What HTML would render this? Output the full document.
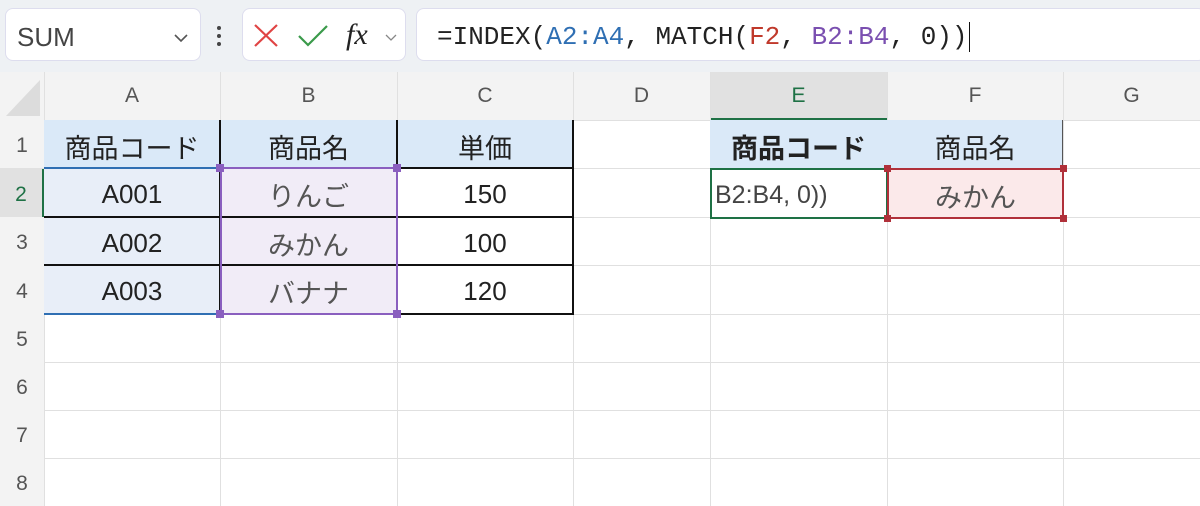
<!DOCTYPE html>
<html><head><meta charset="utf-8"><style>
body{margin:0;width:1200px;height:506px;overflow:hidden;background:#fff;font-family:"Liberation Sans","Noto Sans CJK JP",sans-serif;position:relative}
.a{position:absolute;box-sizing:border-box}
.t{display:flex;align-items:center;justify-content:center}
.hl{position:absolute;height:1px;background:#e0e0e0;left:0;width:1200px}
.vl{position:absolute;width:1px;background:#e0e0e0;top:72px;height:434px}
.ch{position:absolute;top:72px;height:48px;color:#555;font-size:21px;display:flex;align-items:center;justify-content:center}
.rh{position:absolute;left:0;width:44px;color:#555;font-size:21px;display:flex;align-items:center;justify-content:center;background:#f3f3f3;padding-top:4px;box-sizing:border-box}
.c{position:absolute;font-size:26px;color:#222;display:flex;align-items:center;justify-content:center;padding-top:4px;box-sizing:border-box}
.j{font-size:27px}
</style></head><body>
<div class="a" style="left:0;top:0;width:1200px;height:72px;background:#eef1f4"></div>
<div class="a t" style="left:5px;top:8px;width:196px;height:53px;background:#fff;border:1px solid #dde;border-radius:8px;justify-content:flex-start;padding-left:11px;padding-top:6px;font-size:26px;color:#444">SUM</div>
<svg class="a" style="left:173px;top:33px" width="16" height="10"><path d="M2 2L8 8L14 2" stroke="#555" stroke-width="1.6" fill="none"/></svg>
<div class="a" style="left:217px;top:26px;width:4px;height:4px;background:#444;border-radius:2px"></div>
<div class="a" style="left:217px;top:34px;width:4px;height:4px;background:#444;border-radius:2px"></div>
<div class="a" style="left:217px;top:42px;width:4px;height:4px;background:#444;border-radius:2px"></div>
<div class="a" style="left:242px;top:8px;width:164px;height:53px;background:#fff;border:1px solid #dde;border-radius:8px"></div>
<svg class="a" style="left:252px;top:22px" width="28" height="26"><path d="M3 3L25 24M25 3L3 24" stroke="#e04444" stroke-width="2.2"/></svg>
<svg class="a" style="left:297px;top:22px" width="32" height="26"><path d="M2 14L11 23L30 4" stroke="#3a9a4a" stroke-width="2.2" fill="none"/></svg>
<div class="a" style="left:346px;top:18px;font-family:'Liberation Serif',serif;font-style:italic;font-size:30px;color:#222">fx</div>
<svg class="a" style="left:384px;top:33px" width="14" height="9"><path d="M2 2L7 7L12 2" stroke="#888" stroke-width="1.3" fill="none"/></svg>
<div class="a" style="left:416px;top:8px;width:790px;height:53px;background:#fff;border:1px solid #dde;border-radius:8px"></div>
<div class="a" style="left:437px;top:22px;font-family:'Liberation Mono',monospace;font-size:26px;color:#222;white-space:pre">=INDEX(<span style="color:#2f6fb3">A2:A4</span>, MATCH(<span style="color:#c0392b">F2</span>, <span style="color:#7a4fb0">B2:B4</span>, 0))</div>
<div class="a" style="left:969px;top:22px;width:1px;height:30px;background:#111"></div>

<div class="a" style="left:0;top:72px;width:1200px;height:48px;background:#f3f3f3"></div>
<div class="a" style="left:710px;top:72px;width:177px;height:48px;background:#e1e1e1"></div>
<svg class="a" style="left:6px;top:80px" width="34" height="36"><path d="M34 0L34 36L0 36Z" fill="#dcdcdc"/></svg>
<div class="a" style="left:0;top:120px;width:44px;height:386px;background:#f3f3f3"></div>
<div class="a" style="left:0;top:168px;width:44px;height:49px;background:#e1e1e1"></div>
<div class="a" style="left:42px;top:168px;width:2px;height:49px;background:#1e7145"></div>
<div class="a" style="left:710px;top:118px;width:177px;height:2px;background:#1e7145"></div>

<div class="hl" style="top:120px"></div><div class="hl" style="top:168px"></div><div class="hl" style="top:217px"></div><div class="hl" style="top:265px"></div><div class="hl" style="top:314px"></div><div class="hl" style="top:362px"></div><div class="hl" style="top:410px"></div><div class="hl" style="top:458px"></div>
<div class="vl" style="left:44px"></div><div class="vl" style="left:220px"></div><div class="vl" style="left:397px"></div><div class="vl" style="left:573px"></div><div class="vl" style="left:710px"></div><div class="vl" style="left:887px"></div><div class="vl" style="left:1063px"></div>

<div class="ch" style="left:44px;width:176px">A</div><div class="ch" style="left:220px;width:177px">B</div><div class="ch" style="left:397px;width:176px">C</div><div class="ch" style="left:573px;width:137px">D</div><div class="ch" style="left:710px;width:177px;color:#1e7145">E</div><div class="ch" style="left:887px;width:176px">F</div><div class="ch" style="left:1063px;width:137px">G</div>
<div class="rh" style="top:120px;height:48px">1</div><div class="rh" style="top:168px;height:49px;color:#1e7145;background:#e1e1e1;width:42px">2</div><div class="rh" style="top:217px;height:48px">3</div><div class="rh" style="top:265px;height:49px">4</div><div class="rh" style="top:314px;height:48px">5</div><div class="rh" style="top:362px;height:48px">6</div><div class="rh" style="top:410px;height:48px">7</div><div class="rh" style="top:458px;height:48px">8</div>

<div class="a" style="left:44px;top:120px;width:529px;height:48px;background:#dae9f8"></div>
<div class="a" style="left:44px;top:168px;width:176px;height:146px;background:#e8eef8"></div>
<div class="a" style="left:220px;top:168px;width:177px;height:146px;background:#f1ecf7"></div>
<div class="a" style="left:44px;top:120px;width:530px;height:195px;border:2px solid #111;border-top:none;border-left:none"></div>
<div class="a" style="left:219px;top:120px;width:2px;height:195px;background:#111"></div>
<div class="a" style="left:396px;top:120px;width:2px;height:195px;background:#111"></div>
<div class="a" style="left:44px;top:216px;width:530px;height:2px;background:#111"></div>
<div class="a" style="left:44px;top:264px;width:530px;height:2px;background:#111"></div>
<div class="a" style="left:397px;top:167px;width:177px;height:2px;background:#111"></div>
<div class="a" style="left:44px;top:167px;width:176px;height:2px;background:#2f6fb3"></div>
<div class="a" style="left:44px;top:313px;width:176px;height:2px;background:#2f6fb3"></div>
<div class="a" style="left:220px;top:167px;width:178px;height:148px;border:2px solid #8a5fbf"></div>
<div class="a" style="left:216px;top:164px;width:8px;height:8px;background:#8a5fbf"></div><div class="a" style="left:393px;top:164px;width:8px;height:8px;background:#8a5fbf"></div><div class="a" style="left:216px;top:310px;width:8px;height:8px;background:#8a5fbf"></div><div class="a" style="left:393px;top:310px;width:8px;height:8px;background:#8a5fbf"></div>

<div class="c j" style="left:44px;top:120px;width:176px;height:48px">商品コード</div>
<div class="c j" style="left:220px;top:120px;width:177px;height:48px">商品名</div>
<div class="c j" style="left:397px;top:120px;width:176px;height:48px">単価</div>
<div class="c" style="left:44px;top:168px;width:176px;height:49px">A001</div>
<div class="c" style="left:44px;top:217px;width:176px;height:48px">A002</div>
<div class="c" style="left:44px;top:265px;width:176px;height:49px">A003</div>
<div class="c j" style="left:220px;top:168px;width:177px;height:49px;color:#555">りんご</div>
<div class="c j" style="left:220px;top:217px;width:177px;height:48px;color:#555">みかん</div>
<div class="c j" style="left:220px;top:265px;width:177px;height:49px;color:#555">バナナ</div>
<div class="c" style="left:397px;top:168px;width:176px;height:49px">150</div>
<div class="c" style="left:397px;top:217px;width:176px;height:48px">100</div>
<div class="c" style="left:397px;top:265px;width:176px;height:49px">120</div>

<div class="a" style="left:710px;top:120px;width:353px;height:48px;background:#dae9f8;border-right:1px solid #555"></div>
<div class="c j" style="left:710px;top:120px;width:177px;height:48px;font-weight:bold">商品コード</div>
<div class="c j" style="left:887px;top:120px;width:176px;height:48px">商品名</div>
<div class="a" style="left:710px;top:168px;width:178px;height:51px;border:2px solid #1e7145;background:#fff"></div>
<div class="c" style="left:715px;top:168px;height:50px;color:#444;font-size:25px">B2:B4, 0))</div>
<div class="a" style="left:887px;top:168px;width:177px;height:51px;border:2px solid #b0303a;background:#fbe9ea"></div>
<div class="c j" style="left:887px;top:168px;width:177px;height:50px;color:#555">みかん</div>
<div class="a" style="left:884px;top:165px;width:7px;height:7px;background:#b0303a"></div><div class="a" style="left:1060px;top:165px;width:7px;height:7px;background:#b0303a"></div><div class="a" style="left:884px;top:215px;width:7px;height:7px;background:#b0303a"></div><div class="a" style="left:1060px;top:215px;width:7px;height:7px;background:#b0303a"></div>
</body></html>
